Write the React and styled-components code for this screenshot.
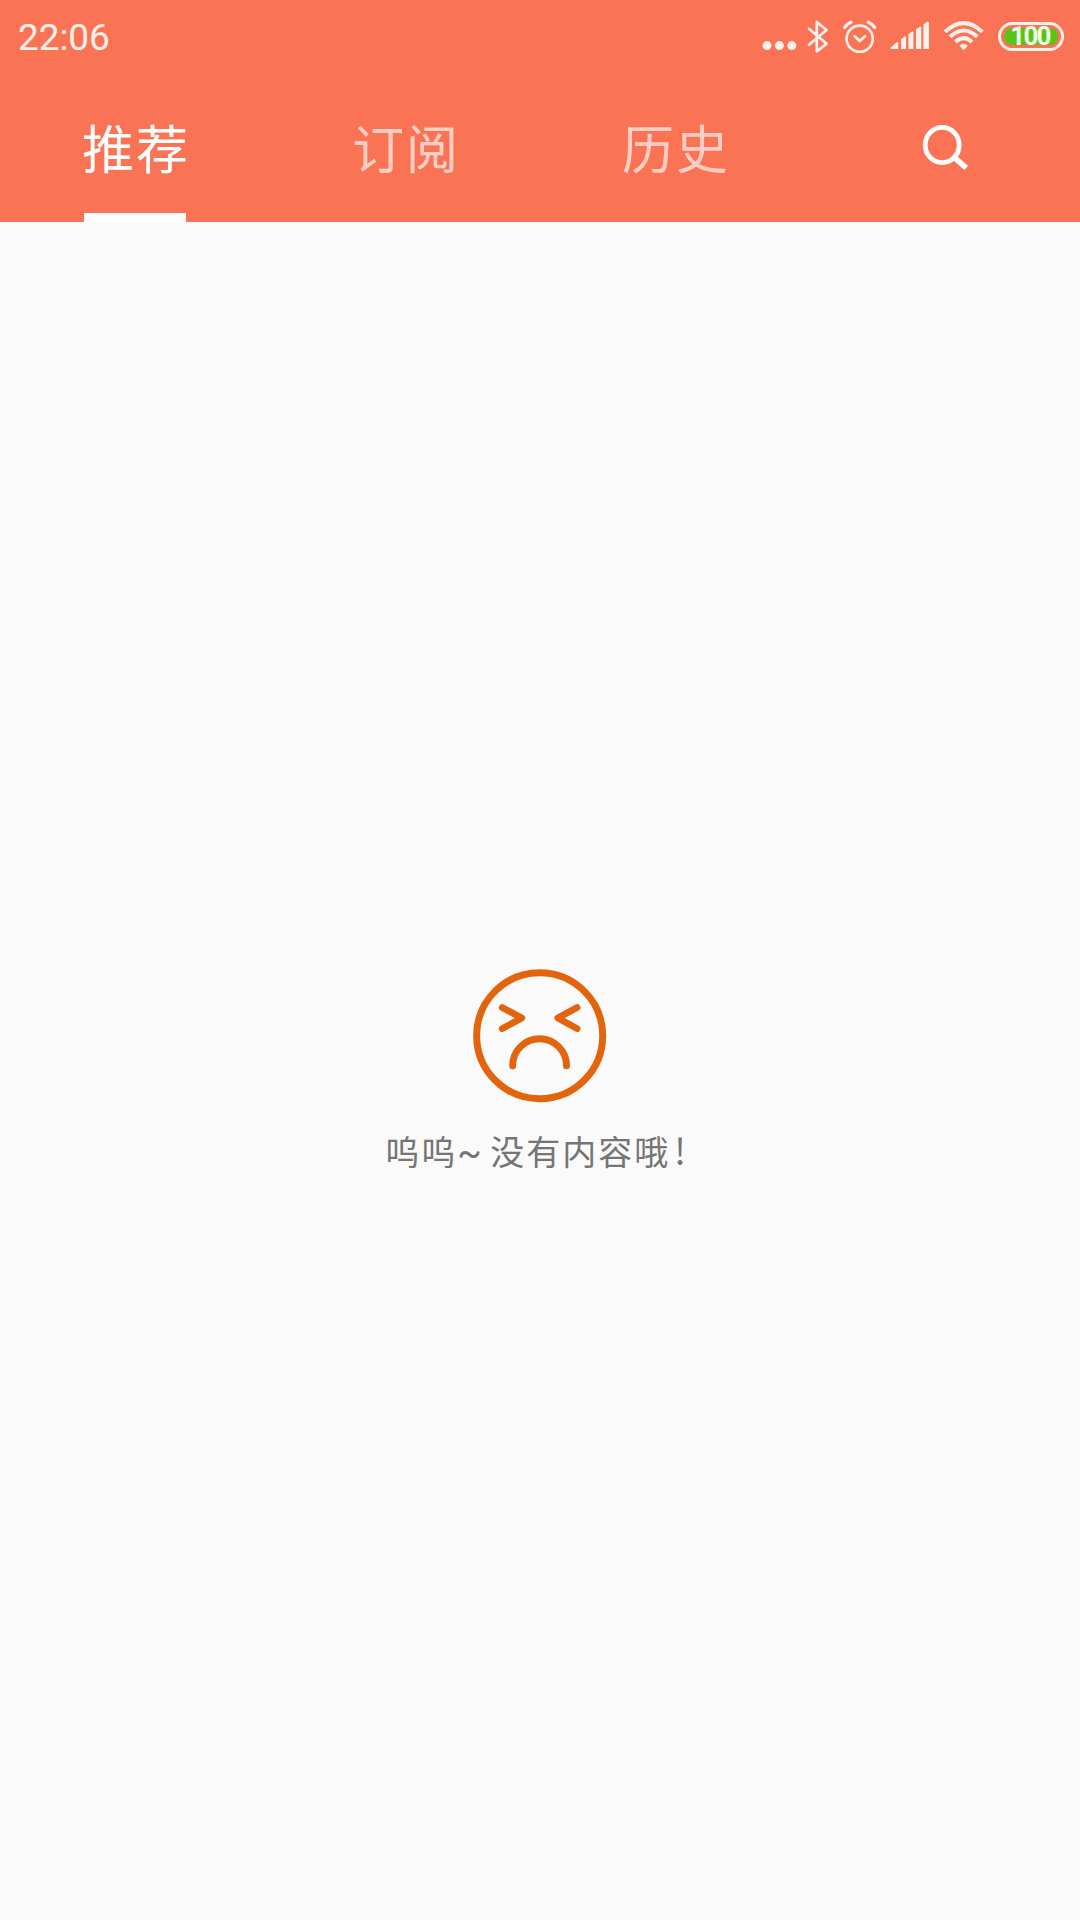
import React from 'react';
import styled, { createGlobalStyle } from 'styled-components';

const Global = createGlobalStyle`
  * { box-sizing: border-box; }
  body { margin: 0; background: #fafafa; }
`;

const Screen = styled.div`
  width: 1080px;
  height: 1920px;
  display: flex;
  flex-direction: column;
  overflow: hidden;
  background: #fafafa;
  font-family: 'Noto Sans CJK SC', sans-serif;
`;

const Header = styled.header`
  height: 222px;
  display: flex;
  flex-direction: column;
  background: #fa7354;
`;

const StatusBar = styled.div`
  height: 72px;
  flex: none;
  display: flex;
  justify-content: space-between;
  padding: 0 16px 0 18px;
  color: #fff0ec;
`;

const Clock = styled.span`
  font: 400 37px/76px Roboto, sans-serif;
  letter-spacing: -0.1px;
`;

const StatusIcons = styled.div`
  display: flex;
  align-items: flex-start;
`;

const Glyphs = styled.svg`
  display: block;
  width: 236px;
  height: 72px;
`;

const Battery = styled.div`
  width: 66px;
  height: 29px;
  margin-top: 22px;
  padding: 3px;
  border: 3px solid #fff0ec;
  border-radius: 15px;
  display: flex;
`;

const Charge = styled.div`
  flex: 1;
  display: flex;
  align-items: center;
  justify-content: center;
  border-radius: 9px;
  background: #57c515;
  color: #f1fbe9;
  font: 700 26px/17px Roboto, sans-serif;
  letter-spacing: -1.8px;
  padding-right: 2px;
`;

const Tabs = styled.nav`
  flex: 1;
  display: grid;
  grid-template-columns: repeat(4, 270px);
`;

const Tab = styled.div`
  display: flex;
  flex-direction: column;
  align-items: center;
  justify-content: space-between;
  color: ${(p) => (p.$active ? '#ffffff' : '#fdcfc4')};
`;

const TabLabel = styled.span`
  font-size: 52px;
  font-weight: 400;
  line-height: 72px;
  padding: 39px 0 0 2px;
  letter-spacing: 2px;
`;

const Underline = styled.div`
  width: 102px;
  height: 9px;
  background: ${(p) => (p.$active ? '#ffffff' : 'transparent')};
`;

const SearchIcon = styled.svg`
  display: block;
  width: 48px;
  height: 48px;
  margin-top: 51px;
`;

const Empty = styled.main`
  flex: 1;
  display: flex;
  flex-direction: column;
  align-items: center;
  padding-top: 747px;
`;

const Face = styled.svg`
  display: block;
  width: 134px;
  height: 134px;
`;

const Message = styled.p`
  margin: 23px 9px 0 0;
  font-size: 34px;
  font-weight: 400;
  line-height: 50px;
  letter-spacing: 2px;
  color: #757575;
  white-space: pre;
`;

const Tilde = styled.span`
  font-family: Roboto, sans-serif;
  font-size: 36px;
  line-height: 1;
  letter-spacing: -0.2px;
`;

const Bang = styled.span`
  padding-left: 4px;
  font-size: 36px;
  line-height: 1;
  letter-spacing: 0;
`;

const tabs = ['推荐', '订阅', '历史'];

function StatusGlyphs() {
  return (
    <Glyphs viewBox="762 0 236 72" fill="none" stroke="#fff0ec" strokeLinecap="round" strokeLinejoin="round">
      <g fill="#fff0ec" stroke="none">
        <circle cx="767" cy="45.6" r="4.5" />
        <circle cx="779.4" cy="45.6" r="4.5" />
        <circle cx="791.8" cy="45.6" r="4.5" />
        <path d="M890.5 49v-1.3l6.5-5.6 1.3.4V49zM901 49V39.2l3.8-3 1.2.5V49zM908.4 49V34.3l3.8-3 1.2.5V49zM916 49V29.5l4-3 1.3.5V49zM923.4 49V24.5l4.2-3 1.3.5V49z" />
        <path d="M959.6 45.6Q963.7 42 967.8 45.6L964.9 49.2Q963.7 50.4 962.5 49.2Z" />
      </g>
      <path strokeWidth="2.8" d="M809 28.8 826.5 43.8 816.8 51.4V22L826.5 30 809 44.8" />
      <circle cx="859.7" cy="38.7" r="13.1" strokeWidth="2.6" />
      <path strokeWidth="2.8" d="M854.6 36.2 859.7 41 865 36.2" />
      <path strokeWidth="3.4" d="M844.7 27.4Q847 24 851 22.3M868.4 22.3Q872.4 24 874.6 27.4" />
      <path strokeWidth="4" strokeLinecap="butt" d="M945.1 31.9Q963.7 14.3 982.3 31.9M950.1 36.8Q963.7 24.2 977.3 36.8M955.4 42Q963.7 34.4 972 42" />
    </Glyphs>
  );
}

export default function App() {
  return (
    <>
      <Global />
      <Screen>
        <Header>
          <StatusBar>
            <Clock>22:06</Clock>
            <StatusIcons>
              <StatusGlyphs />
              <Battery>
                <Charge>100</Charge>
              </Battery>
            </StatusIcons>
          </StatusBar>
          <Tabs>
            {tabs.map((label, i) => (
              <Tab key={label} $active={i === 0}>
                <TabLabel>{label}</TabLabel>
                <Underline $active={i === 0} />
              </Tab>
            ))}
            <Tab $active>
              <SearchIcon viewBox="921 123 48 48" fill="none" stroke="#fff">
                <ellipse cx="942.2" cy="145" rx="17" ry="17.6" strokeWidth="4.8" />
                <path d="M953.6 156.8 966.2 167.8" strokeWidth="5.6" />
              </SearchIcon>
            </Tab>
          </Tabs>
        </Header>
        <Empty>
          <Face viewBox="39 57 402 402" fill="none" stroke="#e2640d" strokeWidth="21" strokeLinecap="round" strokeLinejoin="round">
            <circle cx="239" cy="257" r="189" />
            <path strokeWidth="20" d="M126.5 172.5 185.5 204 126.5 236M351.5 172.5 293.5 204 351.5 236" />
            <path d="M158 347A80.75 80.75 0 0 1 319.5 347" />
          </Face>
          <Message>
            呜呜<Tilde>~ </Tilde>没有内容哦<Bang>!</Bang>
          </Message>
        </Empty>
      </Screen>
    </>
  );
}
